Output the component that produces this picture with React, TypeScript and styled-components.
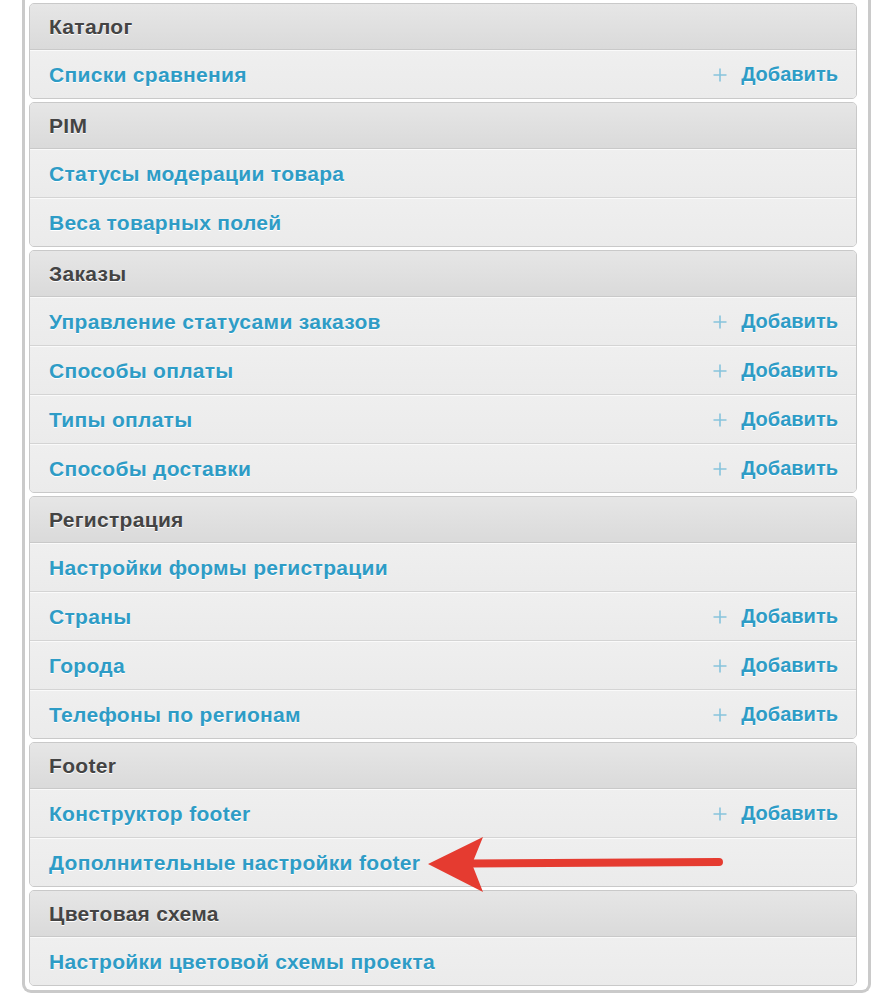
import React from "react";
import styled, { createGlobalStyle } from "styled-components";

const Global = createGlobalStyle`
  html, body { margin: 0; padding: 0; background: #ffffff; }
  body { font-family: "Liberation Sans", Arial, sans-serif; }
`;

const Page = styled.div`
  position: relative;
  width: 882px;
  height: 996px;
  overflow: hidden;
  background: #ffffff;
`;

const Outer = styled.div`
  margin-left: 22px;
  width: 836px;
  border: 3px solid #cacaca;
  border-top: none;
  border-radius: 0 0 9px 9px;
  padding: 3px 3px 4px 4px;
  display: flex;
  flex-direction: column;
  gap: 3px;
  background: #ffffff;
`;

const Module = styled.div`
  width: 826px;
  border: 1px solid #c9c9c9;
  border-radius: 5px;
  overflow: hidden;
  background: #eeeeee;
`;

const Header = styled.div`
  height: 45px;
  display: flex;
  align-items: center;
  padding: 1px 19px 0;
  box-sizing: border-box;
  background: linear-gradient(to bottom, #e6e6e6, #dadada);
  border-bottom: 1px solid #c9c9c9;
  font-size: 21px;
  letter-spacing: 0.3px;
  font-weight: bold;
  color: #444444;
  text-shadow: 0 1px 0 #ffffff;
  height: 46px;
`;

const Row = styled.div<{ $last?: boolean }>`
  height: 47px;
  display: flex;
  align-items: center;
  justify-content: space-between;
  padding: 0 18px 0 19px;
  background: linear-gradient(to bottom, #efefef, #ebebeb);
  border-top: 1px solid #fafafa;
  border-bottom: ${(p) => (p.$last ? "none" : "1px solid #d4d4d4")};
`;

const Link = styled.a`
  font-size: 21px;
  letter-spacing: 0.3px;
  font-weight: bold;
  color: #2e9cc6;
  text-decoration: none;
  text-shadow: 0 1px 0 #ffffff;
`;

const Add = styled.a`
  display: flex;
  align-items: center;
  gap: 14px;
  font-size: 20px;
  font-weight: bold;
  color: #2e9cc6;
  text-decoration: none;
  text-shadow: 0 1px 0 #ffffff;
`;

const Arrow = styled.svg`
  position: absolute;
  left: 0;
  top: 0;
  pointer-events: none;
`;

const PlusIcon = () => (
  <svg width="14" height="14" viewBox="0 0 14 14">
    <path d="M7 0.5V13.5M0.5 7H13.5" stroke="#86c3dc" strokeWidth="1.6" />
  </svg>
);

type Item = { label: string; add?: boolean };
type Section = { title: string; items: Item[] };

const sections: Section[] = [
  { title: "Каталог", items: [{ label: "Списки сравнения", add: true }] },
  {
    title: "PIM",
    items: [{ label: "Статусы модерации товара" }, { label: "Веса товарных полей" }],
  },
  {
    title: "Заказы",
    items: [
      { label: "Управление статусами заказов", add: true },
      { label: "Способы оплаты", add: true },
      { label: "Типы оплаты", add: true },
      { label: "Способы доставки", add: true },
    ],
  },
  {
    title: "Регистрация",
    items: [
      { label: "Настройки формы регистрации" },
      { label: "Страны", add: true },
      { label: "Города", add: true },
      { label: "Телефоны по регионам", add: true },
    ],
  },
  {
    title: "Footer",
    items: [
      { label: "Конструктор footer", add: true },
      { label: "Дополнительные настройки footer" },
    ],
  },
  { title: "Цветовая схема", items: [{ label: "Настройки цветовой схемы проекта" }] },
];

export default function App() {
  return (
    <Page>
      <Global />
      <Outer>
        {sections.map((s) => (
          <Module key={s.title}>
            <Header>{s.title}</Header>
            {s.items.map((it, i) => (
              <Row key={it.label} $last={i === s.items.length - 1}>
                <Link href="#">{it.label}</Link>
                {it.add && (
                  <Add href="#">
                    <PlusIcon />
                    Добавить
                  </Add>
                )}
              </Row>
            ))}
          </Module>
        ))}
      </Outer>
      <Arrow width="882" height="996" viewBox="0 0 882 996">
        <line x1="470" y1="863.5" x2="719" y2="862" stroke="#e53b30" strokeWidth="8" strokeLinecap="round" />
        <polygon points="428,864 483,837 472,864 483,892" fill="#e53b30" />
      </Arrow>
    </Page>
  );
}
